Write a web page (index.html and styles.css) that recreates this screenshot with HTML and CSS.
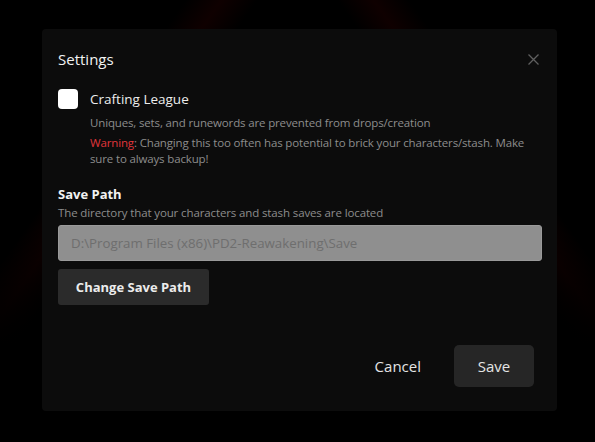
FILE: index.html
```html
<!DOCTYPE html>
<html>
<head>
<meta charset="utf-8">
<link rel="stylesheet" href="styles.css">
</head>
<body>
<div class="backdrop">
  <div class="dialog">
    <div class="header">
      <h1 class="title">Settings</h1>
      <button class="close" aria-label="Close">
        <svg width="11" height="11" viewBox="0 0 11 11"><path d="M0.5 0.5 L10.5 10.5 M10.5 0.5 L0.5 10.5" stroke="#5f5f5f" stroke-width="1.3" fill="none"/></svg>
      </button>
    </div>
    <div class="check-row">
      <span class="checkbox"></span>
      <span class="check-label">Crafting League</span>
    </div>
    <div class="check-desc">
      <p class="desc">Uniques, sets, and runewords are prevented from drops/creation</p>
      <p class="desc warn-line"><span class="warn">Warning</span>: Changing this too often has potential to brick your characters/stash. Make sure to always backup!</p>
    </div>
    <div class="section">
      <h2 class="section-title">Save Path</h2>
      <p class="section-sub">The directory that your characters and stash saves are located</p>
      <div class="path-input">D:\Program Files (x86)\PD2-Reawakening\Save</div>
      <button class="btn-secondary">Change Save Path</button>
    </div>
    <div class="footer">
      <button class="btn-text">Cancel</button>
      <button class="btn-save">Save</button>
    </div>
  </div>
</div>
</body>
</html>
```
FILE: styles.css
```css
* { box-sizing: border-box; }
html, body { margin: 0; padding: 0; }
body {
  width: 595px;
  height: 442px;
  overflow: hidden;
  background: #000;
  font-family: "Open Sans", "Noto Sans", sans-serif;
}
.backdrop {
  width: 595px;
  height: 442px;
  padding: 29px 0 0 42px;
  background:
    linear-gradient(to bottom, rgba(0,0,0,0) 50%, #000 78%),
    linear-gradient(125deg, rgba(0,0,0,0) 20.5%, #0f0000 24.5%, rgba(0,0,0,0) 28.5%),
    linear-gradient(235deg, rgba(0,0,0,0) 20.5%, #0f0000 24.5%, rgba(0,0,0,0) 28.5%),
    #000;
}
.dialog {
  width: 515px;
  height: 382px;
  background: #0c0c0c;
  border-radius: 4px;
  padding: 18px 15px 0 16px;
  display: flex;
  flex-direction: column;
}
.header {
  display: flex;
  justify-content: space-between;
  align-items: center;
  height: 24px;
}
.title {
  margin: 0;
  font-size: 15px;
  font-weight: 400;
  color: #f2f2f2;
  line-height: 24px;
}
.close {
  background: none;
  border: 0;
  padding: 0;
  margin-right: 3px;
  width: 11px;
  height: 11px;
  display: flex;
}
.check-row {
  display: flex;
  align-items: center;
  gap: 12px;
  margin-top: 18px;
  height: 20px;
}
.checkbox {
  width: 20px;
  height: 20px;
  background: #fff;
  border-radius: 4px;
}
.check-label {
  font-size: 13.5px;
  color: #ececec;
  line-height: 20px;
}
.check-desc {
  padding-left: 32px;
  margin-top: 6px;
}
.desc {
  margin: 0;
  font-size: 11.5px;
  letter-spacing: -0.15px;
  line-height: 16px;
  color: #8c8c8c;
}
.warn-line { margin-top: 4px; }
.warn { color: #e0353b; }
.section {
  margin-top: 18px;
  display: flex;
  flex-direction: column;
  align-items: flex-start;
}
.section-title {
  margin: 0;
  font-size: 13px;
  font-weight: 700;
  color: #f2f2f2;
  line-height: 18px;
}
.section-sub {
  margin: 2px 0 0;
  font-size: 11.5px;
  letter-spacing: -0.12px;
  line-height: 16px;
  color: #8c8c8c;
}
.path-input {
  margin-top: 4px;
  width: 484px;
  height: 36px;
  background: #8f8f8f;
  border: 1px solid #9a9a9a;
  border-radius: 3px;
  padding: 0 12px;
  font-size: 13.3px;
  color: #6e6e6e;
  line-height: 34px;
}
.btn-secondary {
  margin-top: 8px;
  width: 151px;
  height: 36px;
  background: #2b2b2b;
  border: 0;
  border-radius: 3px;
  color: #ececec;
  font-family: inherit;
  font-size: 13px;
  font-weight: 700;
  padding: 0;
}
.footer {
  margin-top: 40px;
  display: flex;
  justify-content: flex-end;
  align-items: center;
  gap: 33px;
  padding-right: 8px;
}
.btn-text {
  background: none;
  border: 0;
  padding: 0;
  color: #e4e4e4;
  font-family: inherit;
  font-size: 15px;
}
.btn-save {
  width: 80px;
  height: 42px;
  background: #262626;
  border: 0;
  border-radius: 5px;
  color: #e4e4e4;
  font-family: inherit;
  font-size: 15px;
  padding: 0;
}
```
